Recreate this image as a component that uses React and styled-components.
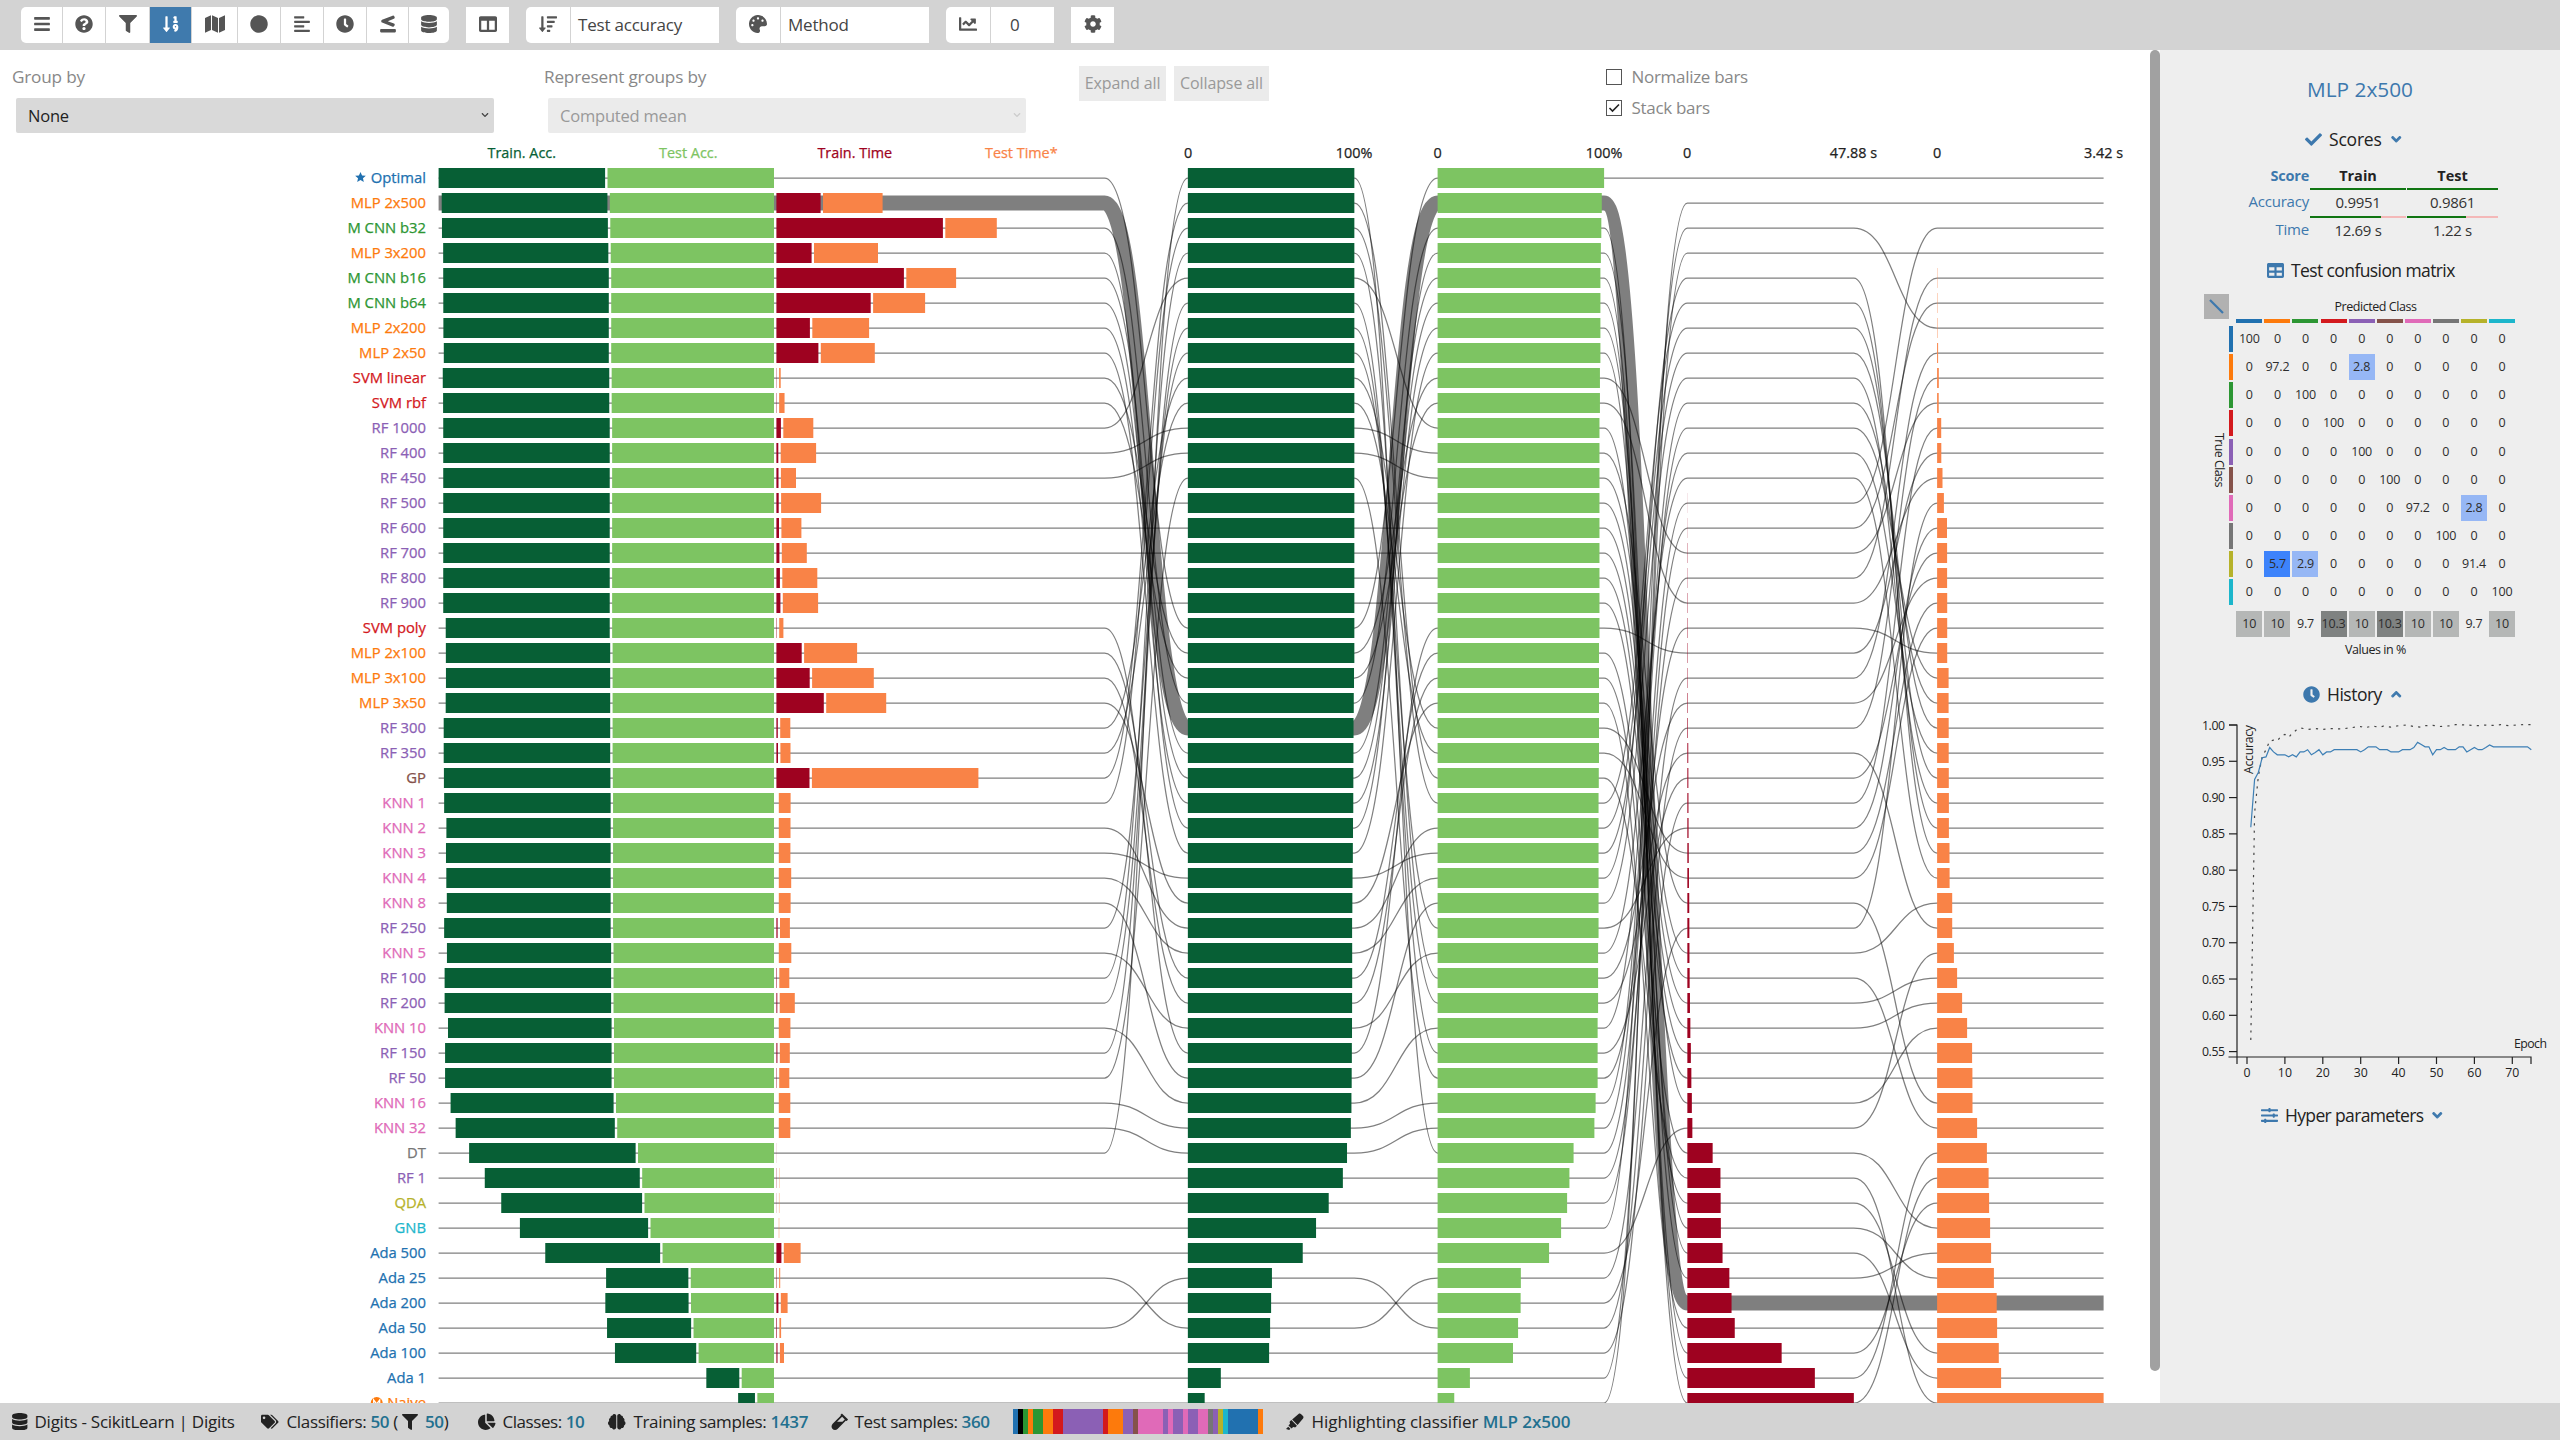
import React from "react";
import styled, { createGlobalStyle } from "styled-components";
import {
  FaBars, FaQuestionCircle, FaFilter, FaSortNumericDown, FaCircle, FaAlignLeft, FaClock,
  FaLessThanEqual, FaDatabase, FaColumns, FaSortAmountDown, FaPalette, FaChartLine, FaCog, FaTags,
  FaChartPie, FaBrain, FaVial, FaHighlighter, FaSlidersH, FaCheck, FaChevronDown, FaChevronUp, FaTable,
} from "react-icons/fa";

const FONT = '"Open Sans", "Noto Sans", sans-serif';

const Global = createGlobalStyle`
  * { box-sizing: border-box; }
  body { margin: 0; background: #fff; font-family: ${FONT}; color: #222; overflow: hidden; }
`;

/* ---------- palette ---------- */
const C = {
  blue: "#2171b0", orange: "#fd7a0c", green: "#2c9633", red: "#d3191d", purple: "#8b60b5",
  brown: "#85524a", pink: "#e06ab8", gray: "#767676", olive: "#b6b22a", cyan: "#1cb6cb", black: "#000",
};
const ACCENT = "#3d78ad";
const BAR = { trainAcc: "#075f35", testAcc: "#7dc462", trainTime: "#9e0220", testTime: "#f98347" };

/* ---------- classifiers: name, family, train acc, test acc, train time px, test time px, rank per column ---------- */
const ROWS = [
  ["Optimal", "blue", 1, 1, 0, 0, 18, 0, 0],
  ["MLP 2x500", "orange", 0.9951, 0.9861, 44.2, 59.6, 22, 45, 45],
  ["M CNN b32", "green", 0.9965, 0.9833, 166.5, 51.5, 21, 49, 40],
  ["MLP 3x200", "orange", 0.992, 0.9806, 35.2, 64, 26, 43, 48],
  ["M CNN b16", "green", 0.9945, 0.9778, 127.5, 49.8, 23, 48, 39],
  ["M CNN b64", "green", 0.994, 0.9778, 94.3, 52, 24, 47, 41],
  ["MLP 2x200", "orange", 0.9935, 0.9778, 33.5, 56.8, 25, 42, 44],
  ["MLP 2x50", "orange", 0.991, 0.9778, 42, 54, 27, 44, 43],
  ["SVM linear", "red", 1, 0.975, 0.3, 1.6, 19, 15, 9],
  ["SVM rbf", "red", 0.998, 0.975, 0.35, 5.4, 20, 17, 12],
  ["RF 1000", "purple", 1, 0.9722, 4.5, 30, 4, 37, 34],
  ["RF 400", "purple", 1, 0.9722, 1.9, 35.4, 10, 29, 37],
  ["RF 450", "purple", 1, 0.9722, 2.1, 15.1, 11, 31, 29],
  ["RF 500", "purple", 1, 0.9722, 2.3, 40, 13, 32, 38],
  ["RF 600", "purple", 1, 0.9722, 2.6, 20, 14, 33, 32],
  ["RF 700", "purple", 1, 0.9722, 3, 25, 15, 34, 33],
  ["RF 800", "purple", 1, 0.9722, 3.5, 35, 16, 35, 35],
  ["RF 900", "purple", 1, 0.9722, 4, 35.3, 17, 36, 36],
  ["SVM poly", "red", 0.985, 0.9722, 0.4, 4.2, 35, 19, 11],
  ["MLP 2x100", "orange", 0.987, 0.9694, 25.3, 53, 32, 39, 42],
  ["MLP 3x100", "orange", 0.9865, 0.9694, 33.3, 61.7, 33, 41, 47],
  ["MLP 3x50", "orange", 0.988, 0.9694, 47.4, 60, 29, 46, 46],
  ["RF 300", "purple", 1, 0.9694, 1.4, 10.1, 8, 27, 17],
  ["RF 350", "purple", 1, 0.9694, 1.6, 10.1, 9, 28, 18],
  ["GP", "brown", 1, 0.9681, 33.1, 166.5, 1, 40, 49],
  ["KNN 1", "pink", 1, 0.9667, 0, 11.8, 2, 5, 26],
  ["KNN 2", "pink", 0.9865, 0.9667, 0, 11.7, 30, 6, 24],
  ["KNN 3", "pink", 0.989, 0.9667, 0, 11.6, 28, 7, 22],
  ["KNN 4", "pink", 0.987, 0.9667, 0, 12.4, 31, 4, 27],
  ["KNN 8", "pink", 0.984, 0.9667, 0, 11.8, 36, 8, 25],
  ["RF 250", "purple", 1, 0.9667, 1.2, 9.9, 7, 26, 14],
  ["KNN 5", "pink", 0.986, 0.9639, 0, 12.5, 34, 12, 28],
  ["RF 100", "purple", 1, 0.9639, 0.5, 10, 3, 21, 16],
  ["RF 200", "purple", 1, 0.9639, 0.9, 15.1, 6, 23, 30],
  ["KNN 10", "pink", 0.9825, 0.9611, 0, 11.6, 37, 11, 23],
  ["RF 150", "purple", 1, 0.9611, 1, 10, 5, 24, 15],
  ["RF 50", "purple", 1, 0.9611, 0.4, 10.1, 12, 18, 19],
  ["KNN 16", "pink", 0.979, 0.949, 0, 11.5, 38, 9, 21],
  ["KNN 32", "pink", 0.956, 0.9417, 0, 11.5, 39, 10, 20],
  ["DT", "gray", 1, 0.8167, 0.1, 0, 0, 13, 2],
  ["RF 1", "purple", 0.931, 0.7917, 0.25, 0.3, 40, 16, 4],
  ["QDA", "olive", 0.846, 0.7778, 0.15, 0.35, 41, 14, 5],
  ["GNB", "cyan", 0.77, 0.7417, 0, 0.4, 42, 2, 6],
  ["Ada 500", "blue", 0.69, 0.6694, 5, 16.8, 43, 38, 31],
  ["Ada 25", "blue", 0.494, 0.5, 0.4, 1, 46, 20, 7],
  ["Ada 200", "blue", 0.5, 0.4986, 2, 6.8, 45, 30, 13],
  ["Ada 50", "blue", 0.505, 0.4833, 0.6, 1.7, 44, 22, 8],
  ["Ada 100", "blue", 0.488, 0.4528, 1.1, 4.1, 47, 25, 10],
  ["Ada 1", "blue", 0.198, 0.194, 0, 0, 48, 3, 3],
  ["Naive", "orange", 0.101, 0.1, 0, 0, 49, 1, 1],
].map(([name, family, trainAcc, testAcc, trainTime, testTime, r1, r3, r4], i) => ({
  name, family, trainAcc, testAcc, trainTime, testTime, ranks: [i, r1, i, r3, r4],
}));
const SELECTED = 1;

/* ---------- toolbar ---------- */
const Page = styled.div`
  width: 2560px; height: 1440px; display: flex; flex-direction: column; overflow: hidden;
`;
const Toolbar = styled.header`
  height: 50px; flex: none; background: #d3d3d3; padding: 7px 0 7px 21px; display: flex; gap: 17px;
`;
const Group = styled.div`
  display: flex; gap: 1px; height: 36px; border-radius: ${(p) => (p.$solo ? 0 : "5px 0 0 5px")};
  ${(p) => p.$round && "border-radius: 5px;"} overflow: hidden;
`;
const ToolButton = styled.button`
  border: 0; padding: 0 0 3px; width: ${(p) => p.$w}px; height: 36px; display: grid; place-items: center;
  background: ${(p) => (p.$active ? "#3f7aad" : "#fff")}; color: ${(p) => (p.$active ? "#fff" : "#555")};
  font-size: 18px;
`;
const Field = styled.div`
  background: #fff; width: ${(p) => p.$w}px; height: 36px; padding-left: ${(p) => p.$pad ?? 7}px; color: #444;
  font-size: 17px; line-height: 36px; letter-spacing: -0.2px;
`;
const MapIcon = () => (
  <svg width="20" height="18" fill="currentColor">
    <path d="M0 3L6 .3V15L0 17.7ZM7 .3L13 3V17.7L7 15ZM14 3L20 .3V15L14 17.7Z" />
  </svg>
);

/* ---------- main area ---------- */
const Body = styled.div`flex: 1; min-height: 0; display: flex;`;
const Main = styled.main`width: 2150px; flex: none; display: flex; flex-direction: column; overflow: hidden;`;
const ScrollTrack = styled.div`width: 10px; flex: none; background: #fff;`;
const ScrollThumb = styled.div`height: 1321px; background: #a1a1a1; border-radius: 5px;`;
const Controls = styled.section`height: 90px; flex: none; display: flex; color: #888; font-size: 17.2px; letter-spacing: -0.2px;`;
const SelectBlock = styled.div`width: ${(p) => p.$w}px; padding: 14px 0 0 ${(p) => p.$pad}px;`;
const Caption = styled.div`height: 26px; line-height: 25px;`;
const Select = styled.div`
  margin: 8px 0 0 4px; width: 478px; height: 35px; padding: 0 5px 1px 12px; border-radius: 2px;
  display: flex; align-items: center; justify-content: space-between;
  background: ${(p) => (p.$off ? "#ebebeb" : "#d9d9d9")}; color: ${(p) => (p.$off ? "#999" : "#222")};
  font-size: 16.5px;
  svg { font-size: 8px; color: ${(p) => (p.$off ? "#ccc" : "#444")}; }
`;
const Buttons = styled.div`display: flex; gap: 8px; padding-top: 16px; width: 527px;`;
const Flat = styled.button`
  border: 0; background: #ebebeb; color: #999; font: 16px ${FONT}; width: ${(p) => p.$w}px; height: 35px;
  letter-spacing: -0.1px; padding: 0 0 1px; white-space: nowrap;
`;
const Checks = styled.div`padding-top: 11px; font-size: 17px; letter-spacing: -0.3px;`;
const CheckLine = styled.label`display: flex; align-items: center; gap: 9.5px; height: 31px; line-height: 28px;`;
const CheckBox = styled.span`
  width: 16px; height: 16px; border: 1.5px solid #555; background: #fff; display: grid; place-items: center; color: #222;
`;
const Chart = styled.svg`display: block; flex: none;`;
const ChartText = styled.text`
  font: ${(p) => p.$weight || 500} ${(p) => p.$size || 14.4}px ${FONT};
  stroke: ${(p) => (p.$weight ? "none" : p.fill)}; stroke-width: 0.25px;
`;

const W = 166.5;
const X0 = 438.6;
const COLX = [1, 2, 3, 4].map((n) => X0 + 4 * W + (n - 1) * 1.5 * W + W / 2);
const TOP = 140;
const rowY = (rank) => 178 + 25 * rank;

function linePath(row) {
  let d = `M${X0},${rowY(row.ranks[0])}H${X0 + 4 * W}`;
  let from = X0 + 4 * W;
  let y = rowY(row.ranks[0]);
  COLX.forEach((x, i) => {
    const ny = rowY(row.ranks[i + 1]);
    const mid = (from + x) / 2;
    d += `C${mid},${y} ${mid},${ny} ${x},${ny}H${x + W}`;
    from = x + W;
    y = ny;
  });
  return d;
}

function Bar({ x, rank, w, kind }) {
  return w > 0 ? <rect x={x} y={rowY(rank) - 10} width={w} height={20} fill={BAR[kind]} /> : null;
}

function RowBars({ row }) {
  const g = 2.4;
  const testX = X0 + 2 * W + g - row.testAcc * W;
  const timeX = X0 + 2 * W + 2 * g;
  const [r0, r1, r2, r3, r4] = row.ranks;
  return (
    <g>
      <Bar x={testX - g - row.trainAcc * W} rank={r0} w={row.trainAcc * W} kind="trainAcc" />
      <Bar x={testX} rank={r0} w={row.testAcc * W} kind="testAcc" />
      <Bar x={timeX} rank={r0} w={row.trainTime} kind="trainTime" />
      <Bar x={timeX + row.trainTime + g} rank={r0} w={row.testTime} kind="testTime" />
      <Bar x={COLX[0]} rank={r1} w={row.trainAcc * W} kind="trainAcc" />
      <Bar x={COLX[1]} rank={r2} w={row.testAcc * W} kind="testAcc" />
      <Bar x={COLX[2]} rank={r3} w={row.trainTime} kind="trainTime" />
      <Bar x={COLX[3]} rank={r4} w={row.testTime} kind="testTime" />
    </g>
  );
}

const HEADS = [
  [521.8, "Train. Acc.", BAR.trainAcc], [688.3, "Test Acc.", BAR.testAcc], [854.8, "Train. Time", BAR.trainTime],
  [1021.3, "Test Time*", BAR.testTime], [1188, "0"], [1354, "100%"], [1437.5, "0"], [1604, "100%"],
  [1687, "0"], [1853.5, "47.88 s"], [1937, "0"], [2103.5, "3.42 s"],
];

function RankChart() {
  return (
    <Chart width="2150" height="1263" viewBox={`0 ${TOP} 2150 1263`}>
      {HEADS.map(([x, t, fill]) => (
        <ChartText key={x} x={x} y={158} textAnchor="middle" fill={fill || "#222"}>{t}</ChartText>
      ))}
      {ROWS.map((row, i) => (
        <path key={row.name} d={linePath(row)} fill="none" stroke="#000" strokeOpacity="0.5"
          strokeWidth={i === SELECTED ? 15 : 1.25} />
      ))}
      {ROWS.map((row) => <RowBars key={row.name} row={row} />)}
      {ROWS.map((row, i) => (
        <ChartText key={row.name} x={426} y={182.7 + 25 * i} textAnchor="end" fill={C[row.family]} $size={14.8}>{row.name}</ChartText>
      ))}
      <path transform="translate(360.5 177.5) scale(5.6)" fill={C.blue}
        d="M0-1L.28-.36L.95-.31L.44.13L.59.81L0 .45L-.59.81L-.44.13L-.95-.31L-.28-.36Z" />
      <g>
        <circle cx="376.7" cy="1403" r="6" fill={C.orange} />
        <path d="M373.7 1407V1400L376.7 1404L379.7 1400V1407" fill="none" stroke="#fff" strokeWidth="1.3" />
      </g>
    </Chart>
  );
}

/* ---------- side panel ---------- */
const Side = styled.aside`width: 400px; flex: none; background: #eee; display: flex; flex-direction: column;`;
const Title = styled.h2`
  margin: 24px 0 0; height: 30px; line-height: 30px; text-align: center; font-weight: 400; font-size: 20.8px; color: ${ACCENT};
`;
const Heading = styled.div`
  display: flex; align-items: center; height: 28px; margin: ${(p) => p.$top}px 0 0 ${(p) => p.$left}px; gap: 7px;
  font-size: 17.5px; line-height: 26px; letter-spacing: ${(p) => p.$ls ?? -0.2}px; color: #222; white-space: nowrap;
  svg { color: ${ACCENT}; font-size: 17px; flex: none; }
  svg:nth-of-type(2) { font-size: 10.5px; margin-left: 2px; stroke: ${ACCENT}; stroke-width: 50px; overflow: visible; }
`;
const ScoreTable = styled.div`
  display: grid; grid-template-columns: 149px 96px 91px; grid-template-rows: 24px 28px 28px; column-gap: 1px;
  margin-top: 11px; font-size: 15px; text-align: center; line-height: 26px;
`;
const ScoreName = styled.div`
  text-align: right; color: ${ACCENT}; letter-spacing: -0.2px; font-weight: ${(p) => (p.$bold ? 700 : 400)};
  font-size: ${(p) => (p.$bold ? 14.5 : 15)}px; line-height: ${(p) => (p.$bold ? 24 : 26)}px;
`;
const ScoreHead = styled.div`font-weight: 700; color: #222; font-size: 14.5px; line-height: 24px;`;
const ScoreValue = styled.div`
  padding-top: 1px; color: #333; letter-spacing: -0.3px;
  background: linear-gradient(90deg, #107512 ${(p) => p.$part}%, #f4b8b8 ${(p) => p.$part}%) 0 0 / 100% 2px no-repeat;
`;
const MatrixBlock = styled.div`
  display: grid; grid-template-columns: 25px 4px 281px; column-gap: 0; margin: 10px 0 0 44px; font-size: 12.5px;
`;
const DiagButton = styled.div`grid-column: 1; width: 25px; height: 25px; background: #b1b1b1; display: grid; place-items: center;`;
const MatrixTop = styled.div`grid-column: 3; text-align: center; line-height: 25px; height: 25px; letter-spacing: -0.45px; padding-left: 4px;`;
const ColBars = styled.div`
  grid-column: 3; display: grid; grid-template-columns: repeat(10, 26px); column-gap: 2.08px; padding: 0 0 0 3.3px; height: 7px;
  width: 285px;
`;
const ColBar = styled.span`height: 3.6px; background: ${(p) => p.$c};`;
const TrueClass = styled.div`
  grid-column: 1; writing-mode: vertical-rl; text-align: center; line-height: 22px; width: 22px; margin-left: 4px;
  height: 267px; font-size: 12.5px; letter-spacing: -0.6px;
`;
const RowBarsCol = styled.div`grid-column: 2; display: grid; grid-auto-rows: 26px; row-gap: 2.16px;`;
const RowBarMark = styled.span`background: ${(p) => p.$c};`;
const Cells = styled.div`
  grid-column: 3; display: grid; grid-template-columns: repeat(10, 26px); grid-auto-rows: 26px; gap: 2.16px 2.08px;
  padding-left: 3.3px; width: 285px;
`;
const Cell = styled.div`
  text-align: center; line-height: 26px; background: ${(p) => p.$bg || "transparent"}; letter-spacing: -0.2px; color: #2d2d2d;
  white-space: nowrap; display: flex; justify-content: center;
`;
const Totals = styled(Cells)`padding-top: 6px;`;
const MatrixFoot = styled.div`grid-column: 3; text-align: center; line-height: 26px; letter-spacing: -0.45px; padding-left: 4px;`;

const CLASS_COLORS = [C.blue, C.orange, C.green, C.red, C.purple, C.brown, C.pink, C.gray, C.olive, C.cyan];
const DIAG = [100, 97.2, 100, 100, 100, 100, 97.2, 100, 91.4, 100];
const OFF = { "1-4": 2.8, "6-8": 2.8, "8-1": 5.7, "8-2": 2.9 };
const TOTALS = [10, 10, 9.7, 10.3, 10, 10.3, 10, 10, 9.7, 10];
const totalColor = (v) => (v === 10 ? "#b5b7b6" : v > 10 ? "#7f8281" : null);

function Matrix() {
  return (
    <MatrixBlock>
      <DiagButton>
        <svg width="15" height="15"><path d="M1 1L14 14" stroke={ACCENT} strokeWidth="2.2" /></svg>
      </DiagButton>
      <MatrixTop>Predicted Class</MatrixTop>
      <ColBars>{CLASS_COLORS.map((c) => <ColBar key={c} $c={c} />)}</ColBars>
      <TrueClass>True Class</TrueClass>
      <RowBarsCol>{CLASS_COLORS.map((c) => <RowBarMark key={c} $c={c} />)}</RowBarsCol>
      <Cells>
        {DIAG.flatMap((d, r) =>
          DIAG.map((_, c) => {
            const off = OFF[`${r}-${c}`];
            const bg = off ? (off > 5 ? "#3d83fb" : "#96b7f5") : null;
            return <Cell key={`${r}-${c}`} $bg={bg}>{r === c ? d : off || 0}</Cell>;
          })
        )}
      </Cells>
      <Totals>{TOTALS.map((v, i) => <Cell key={i} $bg={totalColor(v)}>{v}</Cell>)}</Totals>
      <MatrixFoot>Values in %</MatrixFoot>
    </MatrixBlock>
  );
}

/* history curves: [epoch, accuracy] */
const VAL = "0.859 0.925 0.935 0.955 0.956 0.969 0.963 0.959 0.959 0.959 0.956 0.959 0.956 0.963 0.963 0.966 0.959 0.962 0.966 0.959 0.963 0.963 0.966 0.966 0.966 0.966 0.966 0.966 0.966 0.963 0.966 0.97 0.97 0.97 0.966 0.966 0.966 0.963 0.963 0.963 0.966 0.966 0.966 0.969 0.976 0.973 0.97 0.97 0.959 0.966 0.966 0.969 0.966 0.966 0.966 0.97 0.97 0.963 0.966 0.969 0.966 0.966 0.969 0.9725 0.97 0.97 0.97 0.97 0.97 0.97 0.97 0.97 0.97 0.97 0.966"
  .split(" ").map((v, i) => [i + 1, +v]);
const TRAIN = [
  [1, 0.566], [2, 0.879], [3, 0.93], [4, 0.956], [5, 0.966], [6, 0.978], [7, 0.979], [8, 0.978], [9, 0.985], [10, 0.987],
  [11, 0.983], [12, 0.989], [13, 0.993], [14, 0.996], [15, 0.995], [16, 0.994], [18, 0.995], [20, 0.994], [22, 0.995],
  [25, 0.9945], [27, 0.996], [30, 0.998], [31, 0.996], [33, 0.9985], [35, 0.997], [36, 0.9985], [38, 0.997], [40, 0.999],
  [42, 1], [44, 0.998], [46, 0.997], [47, 0.999], [49, 0.9995], [51, 0.998], [54, 0.999], [55, 1.0005], [60, 0.9995],
  [61, 0.999], [63, 1], [65, 0.9995], [67, 1.0005], [69, 0.999], [71, 1], [73, 1.0005], [75, 1.0005],
];
const hx = (e) => 87 + e * 3.79;
const hy = (v) => 16 + (1 - v) * 725.8;
const pts = (a) => a.map(([e, v]) => `${hx(e).toFixed(1)},${hy(v).toFixed(1)}`).join(" ");
const HistorySvg = styled.svg`display: block; margin-top: 1px; flex: none;`;

function History() {
  return (
    <HistorySvg width="400" height="385">
      <path d="M69 16H77V348M77 348V355M68.5 348H371V355" fill="none" stroke="#222" strokeWidth="1.2" />
      {Array.from({ length: 10 }, (_, i) => {
        const v = 1 - i * 0.05;
        return (
          <g key={i}>
            <path d={`M69 ${hy(v)}H77`} stroke="#222" strokeWidth="1.2" />
            <ChartText $weight={400} $size={12.3} x="65" y={hy(v) + 4.5} textAnchor="end" fill="#222" textLength="23">{v.toFixed(2)}</ChartText>
          </g>
        );
      })}
      {Array.from({ length: 8 }, (_, i) => (
        <g key={i}>
          <path d={`M${hx(i * 10)} 348V355`} stroke="#222" strokeWidth="1.2" />
          <ChartText $weight={400} $size={12.3} x={hx(i * 10)} y="367.5" textAnchor="middle" fill="#222">{i * 10}</ChartText>
        </g>
      ))}
      <ChartText $weight={400} $size={12.3} x="387" y="339" textAnchor="end" fill="#222" textLength="33">Epoch</ChartText>
      <ChartText $weight={400} $size={12.3} transform="translate(93 65) rotate(-90)" fill="#222" textLength="49">Accuracy</ChartText>
      <polyline points={pts(TRAIN)} fill="none" stroke="#444" strokeDasharray="2.2 5.2" strokeWidth="1.2" />
      <polyline points={pts(VAL)} fill="none" stroke="#3d7fb5" strokeWidth="1.2" />
    </HistorySvg>
  );
}

/* ---------- status bar ---------- */
const Status = styled.footer`
  height: 37px; flex: none; background: #d3d3d3; display: flex; align-items: center; padding-left: 11px;
  font-size: 17px; letter-spacing: ${-0.25}px; color: #222; white-space: nowrap;
`;
const Item = styled.div`
  display: flex; align-items: center; width: ${(p) => p.$w}px; flex: none; letter-spacing: ${(p) => p.$ls ?? -0.25}px;
  > svg { font-size: 17.5px; margin-right: ${(p) => p.$gap ?? 6}px; flex: none; }
  b { font-weight: 600; color: #22708f; }
  span { white-space: pre; }
  span svg { font-size: 16px; vertical-align: -2px; margin: 0 6.5px 0 4.5px; }
`;
const Strip = styled.div`display: flex; width: 250px; height: 25px; margin-right: 23px; flex: none;`;
const Stripe = styled.i`flex: 1; background: ${(p) => p.$c};`;

const TOOLS = [
  [FaBars, 41], [FaQuestionCircle, 42], [FaFilter, 43], [FaSortNumericDown, 41, true], [MapIcon, 45], [FaCircle, 42],
  [FaAlignLeft, 42], [FaClock, 42], [FaLessThanEqual, 41], [FaDatabase, 40],
];

export default function App() {
  return (
    <Page>
      <Global />
      <Toolbar>
        <Group $round>
          {TOOLS.map(([Icon, w, active], i) => (
            <ToolButton key={i} $w={w} $active={active}><Icon /></ToolButton>
          ))}
        </Group>
        <Group $solo><ToolButton $w={43}><FaColumns /></ToolButton></Group>
        <Group><ToolButton $w={44}><FaSortAmountDown /></ToolButton><Field $w={148}>Test accuracy</Field></Group>
        <Group><ToolButton $w={44}><FaPalette /></ToolButton><Field $w={148}>Method</Field></Group>
        <Group><ToolButton $w={44}><FaChartLine /></ToolButton><Field $w={63} $pad={19}>0</Field></Group>
        <Group $solo><ToolButton $w={43}><FaCog /></ToolButton></Group>
      </Toolbar>
      <Body>
        <Main>
          <Controls>
            <SelectBlock $w={532} $pad={12}>
              <Caption>Group by</Caption>
              <Select>None<FaChevronDown /></Select>
            </SelectBlock>
            <SelectBlock $w={547} $pad={12}>
              <Caption>Represent groups by</Caption>
              <Select $off>Computed mean<FaChevronDown /></Select>
            </SelectBlock>
            <Buttons><Flat $w={87}>Expand all</Flat><Flat $w={95}>Collapse all</Flat></Buttons>
            <Checks>
              <CheckLine><CheckBox />Normalize bars</CheckLine>
              <CheckLine>
                <CheckBox><svg width="12" height="12"><path d="M1.5 6L4.5 9L11 2.5" fill="none" stroke="#222" strokeWidth="1.6" /></svg></CheckBox>
                Stack bars
              </CheckLine>
            </Checks>
          </Controls>
          <RankChart />
        </Main>
        <ScrollTrack><ScrollThumb /></ScrollTrack>
        <Side>
          <Title>MLP 2x500</Title>
          <Heading $top={21} $left={145}><FaCheck />Scores<FaChevronDown /></Heading>
          <ScoreTable>
            <ScoreName $bold>Score</ScoreName><ScoreHead>Train</ScoreHead><ScoreHead>Test</ScoreHead>
            <ScoreName>Accuracy</ScoreName><ScoreValue $part={100}>0.9951</ScoreValue><ScoreValue $part={100}>0.9861</ScoreValue>
            <ScoreName>Time</ScoreName><ScoreValue $part={74}>12.69 s</ScoreValue><ScoreValue $part={65}>1.22 s</ScoreValue>
          </ScoreTable>
          <Heading $top={12} $left={107} $ls={-0.6}><FaTable />Test confusion matrix</Heading>
          <Matrix />
          <Heading $top={17} $left={143} $ls={-0.5}><FaClock />History<FaChevronUp /></Heading>
          <History />
          <Heading $top={7} $left={101} $ls={-0.65}><FaSlidersH />Hyper parameters<FaChevronDown /></Heading>
        </Side>
      </Body>
      <Status>
        <Item $w={250}><FaDatabase />Digits - ScikitLearn | Digits</Item>
        <Item $w={217} $gap={8} $ls={-0.35}><FaTags /><span>Classifiers: <b>50</b> (<FaFilter /><b>50</b>)</span></Item>
        <Item $w={130} $gap={7} $ls={-0.45}><FaChartPie /><span>Classes: <b>10</b></span></Item>
        <Item $w={223} $gap={8} $ls={-0.35}><FaBrain /><span>Training samples: <b>1437</b></span></Item>
        <Item $w={182} $ls={-0.35}><FaVial /><span>Test samples: <b>360</b></span></Item>
        <Strip>{ROWS.map((r, i) => <Stripe key={r.name} $c={i === SELECTED ? C.black : C[r.family]} />)}</Strip>
        <Item $w={300} $gap={8} $ls={-0.05}><FaHighlighter /><span>Highlighting classifier <b>MLP 2x500</b></span></Item>
      </Status>
    </Page>
  );
}
